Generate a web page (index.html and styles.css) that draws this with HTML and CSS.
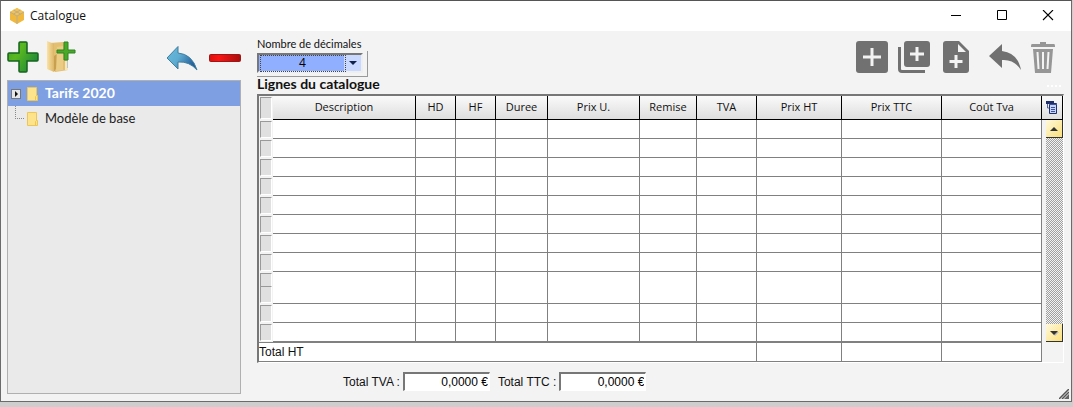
FILE: index.html
```html
<!DOCTYPE html>
<html lang="fr">
<head>
<meta charset="utf-8">
<title>Catalogue</title>
<link rel="stylesheet" href="styles.css">
</head>
<body>
<div class="window">
  <header class="titlebar">
    <svg class="app-icon" viewBox="0 0 16 16"><path d="M8 0 15 4v8l-7 4-7-4V4z" fill="#f0b83c"/><path d="M8 0 15 4 8 8 1 4z" fill="#f5c250"/><path d="M1 4l7 4 7-4M8 8v8M4.500 2l7 4M11.500 2l-7 4" fill="none" stroke="#b9ad90" stroke-width="1"/></svg>
    <h1 class="title">Catalogue</h1>
    <div class="caption-buttons">
      <button class="caption" aria-label="Réduire"><svg viewBox="0 0 12 12"><path d="M1 5.500h10" stroke="#000"/></svg></button>
      <button class="caption" aria-label="Agrandir"><svg viewBox="0 0 12 12"><path d="M1.500 .5h9v9h-9z" fill="none" stroke="#000"/></svg></button>
      <button class="caption" aria-label="Fermer"><svg viewBox="0 0 12 12"><path d="M1 0l10 10M11 0 1 10" stroke="#000" stroke-width="1.100"/></svg></button>
    </div>
  </header>
  <div class="content">
    <aside class="sidebar">
      <div class="toolbar">
        <button class="tool" aria-label="Ajouter"><svg viewBox="0 0 32 32"><defs><linearGradient id="green" x1="0" y1="0" x2="1" y2="0.600"><stop offset="0" stop-color="#3f9f25"/><stop offset=".4" stop-color="#5bb91f"/><stop offset="1" stop-color="#1f8a37"/></linearGradient></defs><path d="M13 1h6q1 0 1 1v10h10q1 0 1 1v6q0 1-1 1H20v10q0 1-1 1h-6q-1 0-1-1V20H2q-1 0-1-1v-6q0-1 1-1h10V2q0-1 1-1z" fill="url(#green)" stroke="#16641f" stroke-width="1.500"/></svg></button>
        <button class="tool tool-folder" aria-label="Ajouter un dossier"><svg viewBox="0 0 32 32"><defs><linearGradient id="folder" x1="0" y1="0" x2="1" y2="0"><stop offset="0" stop-color="#fae3a5"/><stop offset="1" stop-color="#dcb667"/></linearGradient></defs><path d="M5 2l13-1 5 3v25l-13 2z" fill="#e3bf72"/><path d="M2 0l7 3v28l-7-3z" fill="url(#folder)"/><path d="M9 15l3-2v13l-3 5z" fill="#c99f50"/><path d="M12 6l6-1v24l-7 1z" fill="#ebcc85"/><path d="M20 20h3v9h-3z" fill="#f8e7b9"/><path d="M22.500 19v8" fill="none" stroke="#b4c6d8"/><path d="M19 1h4v8h7v3h-7v7h-4v-7h-7V9h7z" fill="#4aa827" stroke="#2c8424"/></svg></button>
        <span class="spacer"></span>
        <button class="tool" aria-label="Annuler"><svg viewBox="0 0 32 32"><defs><linearGradient id="blue" x1="0" y1="0" x2="1" y2="0.500"><stop offset="0" stop-color="#67bddd"/><stop offset=".5" stop-color="#5dabd1"/><stop offset="1" stop-color="#245f9b"/></linearGradient></defs><path d="M11 5.500 0 17l11 11v-7q11-1 19 8Q25 13 11 12z" fill="url(#blue)" stroke="#417f9f" stroke-width="1"/></svg></button>
        <button class="tool tool-minus" aria-label="Supprimer"><svg viewBox="0 0 32 32"><defs><linearGradient id="red" x1="0" y1="0" x2="1" y2="0"><stop offset="0" stop-color="#dc100d"/><stop offset=".3" stop-color="#fa1614"/><stop offset="1" stop-color="#a90d0d"/></linearGradient></defs><rect x=".5" y="13.500" width="31" height="7" rx="1" fill="url(#red)" stroke="#991818"/></svg></button>
      </div>
      <ul class="tree">
        <li class="node node-selected"><button class="expander" aria-label="Développer"><svg viewBox="0 0 8 8"><path d="M3 1v6l3-3z" fill="#111"/></svg></button><svg class="folder" viewBox="0 0 11 14"><path d="M.5.500h9v8h1v5H.5z" fill="#fde38b" stroke="#edc655"/><path d="M8.500 13V9.500l1-1" fill="none" stroke="#edc655"/></svg><span>Tarifs 2020</span></li>
        <li class="node"><span class="branch"></span><svg class="folder" viewBox="0 0 11 14"><path d="M.5.500h9v8h1v5H.5z" fill="#fde38b" stroke="#edc655"/><path d="M8.500 13V9.500l1-1" fill="none" stroke="#edc655"/></svg><span>Modèle de base</span></li>
      </ul>
    </aside>
    <main class="main">
      <div class="top">
        <div class="decimals">
          <label class="label" for="dec">Nombre de décimales</label>
          <div class="combo"><div class="combo-inner"><select id="dec" class="combo-select"><option>4</option></select><svg class="combo-arrow" viewBox="0 0 16 16"><path d="M4 6h8l-4 4z" fill="#10214a"/></svg></div></div>
        </div>
        <div class="actions">
          <button class="tool" aria-label="Ajouter une ligne"><svg viewBox="0 0 32 32"><path d="M3 0h26q3 0 3 3v26q0 3-3 3H3q-3 0-3-3V3q0-3 3-3z" fill="#717171"/><path d="M16 7v18M7 16h18" stroke="#f3f3f3" stroke-width="3"/></svg></button>
          <button class="tool" aria-label="Dupliquer"><svg viewBox="0 0 32 32"><rect x="6" width="26" height="26" rx="3" fill="#717171"/><path d="M19 6v14M12 13h14" stroke="#f3f3f3" stroke-width="3"/><path d="M1.500 6v22q0 2.500 2.500 2.500h23" fill="none" stroke="#717171" stroke-width="3"/></svg></button>
          <button class="tool" aria-label="Nouveau document"><svg viewBox="0 0 32 32"><path d="M6 0h13l10 10v19q0 3-3 3H6q-3 0-3-3V3q0-3 3-3z" fill="#717171"/><path d="M18 3v8h8z" fill="#f3f3f3"/><path d="M16 14v13M9.500 20.500h13" stroke="#f3f3f3" stroke-width="3"/></svg></button>
          <button class="tool tool-undo" aria-label="Annuler la modification"><svg viewBox="0 0 32 32"><path d="M13 3 0 15l13 12v-8q12-1 19 10Q29 12 13 10z" fill="#717171"/></svg></button>
          <button class="tool tool-trash" aria-label="Supprimer la ligne"><svg viewBox="0 0 24 32"><path d="M9 1h6v2h8q1 0 1 2v1H0V5q0-2 1-2h8z" fill="#969696"/><path d="M2 8h20l-2 24H4z" fill="#969696"/><path d="M6.500 11l1 17M12 11v17M17.500 11l-1 17" stroke="#f3f3f3" stroke-width="2"/></svg></button>
        </div>
      </div>
      <div class="heading"><h2 class="subtitle">Lignes du catalogue</h2><span class="dots"></span></div>
      <div class="grid">
        <table class="lines">
          <colgroup><col class="w14"><col><col class="w40"><col class="w40"><col class="w52"><col class="w92"><col class="w57"><col class="w60"><col class="w85"><col class="w100"><col class="w100"></colgroup>
          <thead><tr><th class="mark"><i></i></th><th>Description</th><th>HD</th><th>HF</th><th>Duree</th><th>Prix U.</th><th>Remise</th><th>TVA</th><th>Prix HT</th><th>Prix TTC</th><th>Coût Tva</th></tr></thead>
          <tbody>
            <tr><td class="mark"><i></i></td><td></td><td></td><td></td><td></td><td></td><td></td><td></td><td></td><td></td><td></td></tr>
            <tr><td class="mark"><i></i></td><td></td><td></td><td></td><td></td><td></td><td></td><td></td><td></td><td></td><td></td></tr>
            <tr><td class="mark"><i></i></td><td></td><td></td><td></td><td></td><td></td><td></td><td></td><td></td><td></td><td></td></tr>
            <tr><td class="mark"><i></i></td><td></td><td></td><td></td><td></td><td></td><td></td><td></td><td></td><td></td><td></td></tr>
            <tr><td class="mark"><i></i></td><td></td><td></td><td></td><td></td><td></td><td></td><td></td><td></td><td></td><td></td></tr>
            <tr><td class="mark"><i></i></td><td></td><td></td><td></td><td></td><td></td><td></td><td></td><td></td><td></td><td></td></tr>
            <tr><td class="mark"><i></i></td><td></td><td></td><td></td><td></td><td></td><td></td><td></td><td></td><td></td><td></td></tr>
            <tr><td class="mark"><i></i></td><td></td><td></td><td></td><td></td><td></td><td></td><td></td><td></td><td></td><td></td></tr>
            <tr class="tall"><td class="mark"><i class="half"></i><i></i></td><td></td><td></td><td></td><td></td><td></td><td></td><td></td><td></td><td></td><td></td></tr>
            <tr><td class="mark"><i></i></td><td></td><td></td><td></td><td></td><td></td><td></td><td></td><td></td><td></td><td></td></tr>
            <tr><td class="mark"><i></i></td><td></td><td></td><td></td><td></td><td></td><td></td><td></td><td></td><td></td><td></td></tr>
          </tbody>
          <tfoot><tr><td colspan="8">Total HT</td><td></td><td></td><td></td></tr></tfoot>
        </table>
        <div class="scroll">
          <button class="columns" aria-label="Colonnes"><svg viewBox="0 0 12 13"><path d="M0 0h8v3H0z" fill="#1f2f6b"/><path d="M1.500 3v4H3" fill="none" stroke="#53619a"/><path d="M3.500 2.500h7v10h-7z" fill="#c6d4fa" stroke="#1f2f6b"/><path d="M3 3.500h8M5 6.500h4M5 8.500h4M5 10.500h4" stroke="#3c52a0"/></svg></button>
          <button class="arrow" aria-label="Monter"><svg viewBox="0 0 16 16"><path d="M4 10h8L8 6z" fill="#333"/></svg></button>
          <div class="track"></div>
          <button class="arrow" aria-label="Descendre"><svg viewBox="0 0 16 16"><path d="M6 7h7l-4 4z" fill="#bbb"/><path d="M4 6h8l-4 4z" fill="#333"/></svg></button>
        </div>
      </div>
      <div class="totals">
        <label class="total-label" for="tva">Total TVA :</label><input id="tva" class="total" value="0,0000 €">
        <label class="total-label" for="ttc">Total TTC :</label><input id="ttc" class="total" value="0,0000 €">
      </div>
    </main>
    <svg class="grip" viewBox="0 0 10 10"><path d="M0 10 10 0M3 10l7-7" stroke="#555" stroke-width="1.500"/><path d="M5 10l5-5v5z" fill="#666"/></svg>
  </div>
</div>
</body>
</html>
```
FILE: styles.css
```css
* { box-sizing: border-box; }
body { margin: 0; min-height: 100vh; display: flex; padding: 0 1px 5px 0; background: #cecece; font-family: "Open Sans", sans-serif; font-size: 11px; color: #111; }
button { border: 0; padding: 0; margin: 0; background: none; }
svg { display: block; }
.window { flex: 1; display: flex; flex-direction: column; border: 1px solid #6b6b6b; border-top-color: #555; background: #f3f3f3; }
.titlebar { display: flex; align-items: center; height: 30px; padding-left: 8px; background: #fff; }
.app-icon { width: 16px; height: 16px; }
.title { margin: 0 0 0 5px; flex: 1; font: 400 12px/16px "Open Sans", sans-serif; }
.caption-buttons { display: flex; }
.caption { display: flex; align-items: center; justify-content: center; width: 46px; height: 30px; }
.caption svg { width: 12px; height: 12px; }
.content { position: relative; flex: 1; display: flex; gap: 16px; padding: 8px 7px 7px 6px; }
.sidebar { width: 234px; display: flex; flex-direction: column; }
.toolbar { display: flex; align-items: flex-start; height: 41px; padding-top: 2px; }
.tool { width: 32px; height: 32px; }
.tool svg { width: 100%; height: 100%; }
.tool-folder { margin-left: 6px; }
.tool-minus { margin-left: 10px; }
.spacer { flex: 1; }
.tree { flex: 1; margin: 0; padding: 0; list-style: none; border: 1px solid #b0b0b0; background: #eaeaea; }
.node { display: flex; align-items: center; height: 25px; padding-left: 4px; font: 13px/24px Lato, sans-serif; color: #222; }
.node span:last-child { height: 25px; margin-left: 7px; }
.node-selected { background: #7f9fe3; color: #fff; font-size: 14px; font-weight: 700; }
.expander { width: 8px; height: 8px; background: #e6e6e6; outline: 1px solid #777; }
.expander svg { width: 8px; height: 8px; }
.folder { width: 11px; height: 14px; margin-left: 7px; }
.branch { align-self: flex-start; width: 9px; height: 13px; margin-left: 3px; border-left: 1px dotted #888; border-bottom: 1px dotted #888; }
.branch + .folder { margin-left: 3px; }
.main { flex: 1; min-width: 0; display: flex; flex-direction: column; }
.top { display: flex; justify-content: space-between; height: 38px; }
.label { display: block; height: 12px; font: 11px/9px Lato, sans-serif; }
.combo { width: 111px; height: 26px; padding: 2px 4px 3px 0; border-right: 1px solid #999; border-bottom: 1px solid #999; }
.combo-inner { position: relative; height: 20px; border: 2px solid #777; border-right-color: #eee; border-bottom-color: #eee; background: #fff; }
.combo-select { appearance: none; display: block; width: 100%; height: 16px; border: 0; padding: 0 15px 0 0; outline: 0; border-radius: 0; background: linear-gradient(90deg, #91afff 0 calc(100% - 17px), #c9d8ff 0); font: 12px/16px "Open Sans", sans-serif; text-align: center; text-align-last: center; }
.combo-inner::before { content: ""; position: absolute; left: 1px; top: 0; width: calc(100% - 18px); height: 15px; border: 1px dotted #444; pointer-events: none; }
.combo-arrow { position: absolute; right: 0; top: 0; width: 16px; height: 16px; pointer-events: none; }
.actions { display: flex; padding: 2px 9px 0 0; gap: 10px; }
.tool-undo { margin-left: 7px; }
.tool-trash { width: 24px; }
.heading { display: flex; align-items: center; justify-content: space-between; height: 17px; }
.subtitle { align-self: flex-start; margin: 0; font: 700 14px/14px Lato, sans-serif; }
.dots { width: 14px; height: 2px; margin-right: 3px; background: repeating-linear-gradient(90deg, #fff 0 2px, transparent 2px 4px); }
.grid { display: flex; border: 1px solid #fff; border-left: 2px solid #777; border-top: 2px solid #777; background: #f3f3f3; }
.lines { flex: 1; min-width: 0; table-layout: fixed; border-collapse: separate; border-spacing: 0; background: #fff; }
.w14 { width: 14px; } .w40 { width: 40px; } .w52 { width: 52px; } .w57 { width: 57px; } .w60 { width: 60px; } .w85 { width: 85px; } .w92 { width: 92px; } .w100 { width: 100px; }
.lines th { height: 24px; padding: 0 0 2px; border-right: 1px solid #000; border-bottom: 1px solid #000; background: linear-gradient(#fafafa, #dedede); font-weight: 400; line-height: 16px; }
.lines td { height: 19px; padding: 0; border-right: 1px solid #808080; border-bottom: 1px solid #808080; }
.lines .tall td { height: 32px; }
.lines .mark { padding: 1px; border: 0; background: #f3f3f3; }
.mark i { display: block; width: 12px; height: 17px; border: 1px solid #999; border-right-color: #fff; border-bottom-color: #fff; background: #e0e0e0; }
.lines th.mark i { height: 22px; }
.mark .half { height: 13px; border-bottom: 0; }
.lines tfoot td { height: 20px; border-top: 1px solid #808080; font: 12px/17px "Liberation Sans", sans-serif; }
.scroll { display: flex; flex-direction: column; width: 21px; padding-bottom: 20px; }
.columns { display: flex; align-items: center; justify-content: center; height: 24px; border-right: 1px solid #000; border-bottom: 1px solid #000; background: linear-gradient(#fafafa, #dedede); }
.columns svg { width: 12px; height: 13px; }
.arrow { width: 17px; height: 18px; margin-left: 4px; border-right: 1px solid #333; border-bottom: 1px solid #333; background: linear-gradient(135deg, #fff9dd, #fbe07a); }
.arrow svg { width: 16px; height: 16px; }
.track { flex: 1; margin-left: 4px; background: repeating-conic-gradient(#a0a0a0 0 25%, #f3f3f3 0 50%) 0 0 / 2px 2px; }
.totals { display: flex; align-items: center; padding: 9px 0 0 86px; }
.total-label { margin-right: 3px; font: 12px/16px "Liberation Sans", sans-serif; }
.total { width: 87px; height: 19px; margin-right: 8px; padding: 0 1px; border: 2px solid #777; border-right: 1px solid #fff; border-bottom: 1px solid #fff; background: #fff; font: 12px/16px "Liberation Sans", sans-serif; text-align: right; }
.grip { position: absolute; right: 2px; bottom: 2px; width: 10px; height: 10px; }
```
